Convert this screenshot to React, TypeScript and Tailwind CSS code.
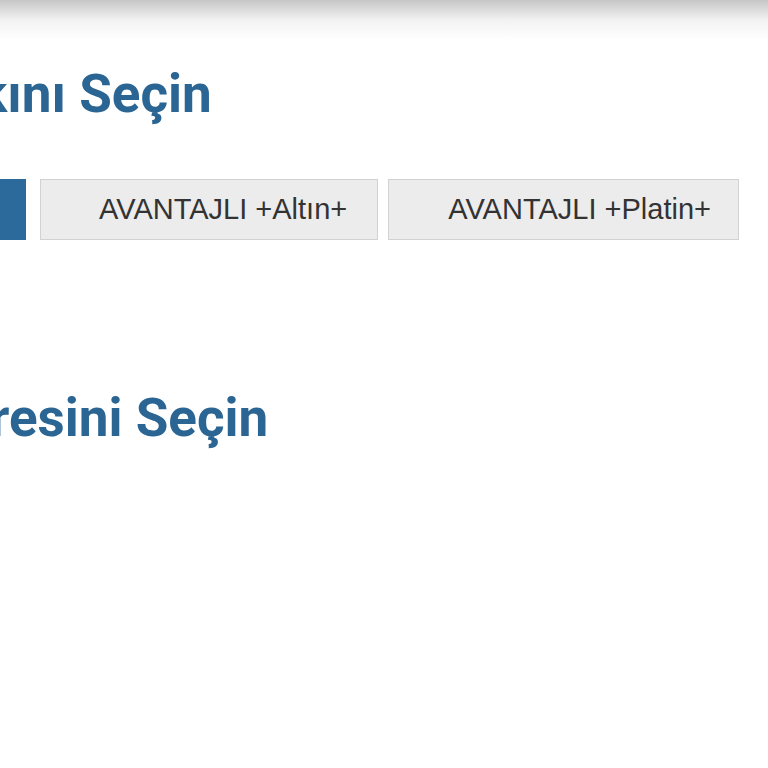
export default function App() {
  return (
    <div className="min-h-[768px] w-[768px] overflow-hidden bg-white">
      <div className="h-[40px] bg-gradient-to-b from-[#c6c6c6] via-[#f2f2f2] to-white" />

      <h2 className="mt-[28px] -ml-[21px] whitespace-nowrap text-[53px] font-bold leading-none text-[#2b6593] [font-family:Roboto,'Noto_Sans',sans-serif]">
        kını Seçin
      </h2>

      <div className="mt-[58px] flex items-stretch">
        <div className="-ml-[34px] mr-[14px] h-[61px] w-[60px] bg-[#2b6a9b]" />
        <button className="mr-[10px] h-[61px] whitespace-nowrap border border-[#d2d2d2] bg-[#ececec] pl-[58px] pr-[30px] text-[29px] text-[#333] [font-family:'Liberation_Sans',Arial,sans-serif]">
          AVANTAJLI +Altın+
        </button>
        <button className="h-[61px] whitespace-nowrap border border-[#d2d2d2] bg-[#ececec] pl-[59px] pr-[27px] text-[29px] text-[#333] [font-family:'Liberation_Sans',Arial,sans-serif]">
          AVANTAJLI +Platin+
        </button>
      </div>

      <h2 className="mt-[152px] -ml-[10px] whitespace-nowrap text-[53px] font-bold leading-none text-[#2b6593] [font-family:Roboto,'Noto_Sans',sans-serif]">
        resini Seçin
      </h2>
    </div>
  );
}
